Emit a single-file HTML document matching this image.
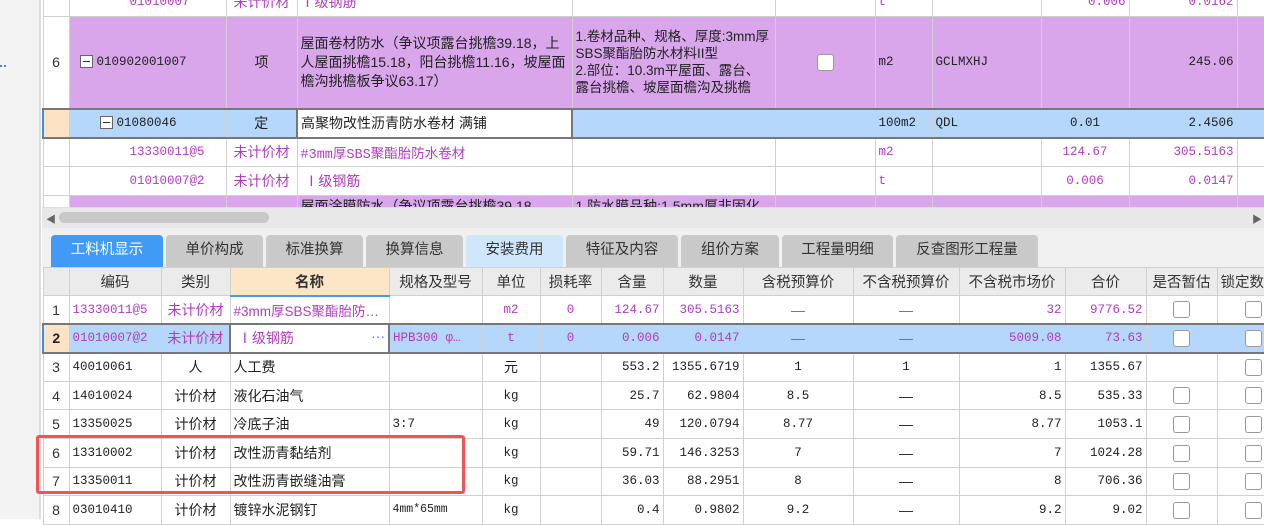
<!DOCTYPE html>
<html><head><meta charset="utf-8"><style>
*{box-sizing:border-box;margin:0;padding:0}
body{width:1264px;height:519px;overflow:hidden;background:#fff;font-family:"Liberation Sans","Noto Sans CJK SC",sans-serif;font-size:14px;color:#222;position:relative}
.side{position:absolute;left:0;top:0;width:41px;height:519px;background:#f3f3f3;border-right:2px solid #ddd}
.dots{position:absolute;left:0;top:65px;width:6px;height:2px;border-left:2px solid #4a7fd0;border-right:2px solid #4a7fd0}
table{border-collapse:collapse;table-layout:fixed;position:absolute}
td{border:1px solid #d0d0d0;height:29px;padding:0 3px;white-space:nowrap;overflow:hidden;font-size:14px}
.bt td{height:28.6px}
.m{font-family:"Liberation Mono","Noto Sans CJK SC",monospace;font-size:12.5px}
.c{text-align:center}.r{text-align:right}
.pk{color:#b03cc0}
.pu td{background:#d9a6ec}
.sel td{background:#b4d7fb;border-top:2px solid #777;border-bottom:2px solid #777}
.num{color:#333;text-align:center}
.wrap{white-space:normal;line-height:19px;font-size:14px;vertical-align:middle}
.topclip{position:absolute;left:42px;top:0;width:1222px;height:207px;overflow:hidden}
.box{display:inline-block;width:13px;height:13px;border:1px solid #666;background:#fff;vertical-align:middle;position:relative;margin-right:4px}
.box:after{content:"";position:absolute;left:2px;right:2px;top:5px;height:1px;background:#333}
.cb{display:inline-block;width:17px;height:17px;border:1px solid #999;border-radius:3px;background:#fff;vertical-align:middle}
.sb{position:absolute;left:42px;top:207px;width:1222px;height:21px;background:#e8e8e8;border-top:1px solid #ddd}
.thumb{position:absolute;left:17px;top:4px;width:210px;height:11px;background:#c9c9c9;border-radius:6px}
.tabs{position:absolute;left:42px;top:228px;width:1222px;height:39px;background:#f0f0f0}
.tab{position:absolute;top:7px;height:32px;background:#c9c9c9;border-radius:4px 4px 0 0;text-align:center;line-height:31px;font-size:14.5px;color:#333}
.hd td{background:#ebebeb;text-align:center;height:28px;font-size:14.5px;color:#333}
.redbox{position:absolute;left:36px;top:435px;width:429px;height:59px;border:3px solid #f05555;border-radius:3px}
</style></head><body>
<div class="side"><div class="dots"></div></div>

<div class="topclip">
<table style="left:0;top:-14px;width:1240px">
<colgroup><col style="width:26px"><col style="width:157px"><col style="width:71px"><col style="width:275px"><col style="width:203px"><col style="width:100px"><col style="width:57px"><col style="width:109px"><col style="width:88px"><col style="width:108px"><col style="width:46px"></colgroup>
<tr style="height:30px"><td></td><td class="m pk" style="padding-left:60px">01010007</td><td class="pk c">未计价材</td><td class="pk">Ⅰ级钢筋</td><td></td><td></td><td class="m pk">t</td><td></td><td class="m pk r">0.006</td><td class="m pk r">0.0162</td><td></td></tr>
<tr class="pu" style="height:92px"><td class="num" style="background:#fff">6</td><td class="m" style="padding-left:10px"><span class="box"></span>010902001007</td><td class="c">项</td><td class="wrap">屋面卷材防水（争议项露台挑檐39.18，上人屋面挑檐15.18，阳台挑檐11.16，坡屋面檐沟挑檐板争议63.17）</td><td class="wrap" style="font-size:13.5px;line-height:17px">1.卷材品种、规格、厚度:3mm厚SBS聚酯胎防水材料II型<br>2.部位：10.3m平屋面、露台、露台挑檐、坡屋面檐沟及挑檐</td><td class="c"><span class="cb"></span></td><td class="m">m2</td><td class="m">GCLMXHJ</td><td></td><td class="m r">245.06</td><td></td></tr>
<tr class="sel"><td style="background:#fde3c4;border-left:2px solid #3b8ee0"></td><td class="m" style="padding-left:30px"><span class="box"></span>01080046</td><td class="c">定</td><td style="background:#fff;border:2px solid #777">高聚物改性沥青防水卷材 满铺</td><td></td><td></td><td class="m">100m2</td><td class="m">QDL</td><td class="m c">0.01</td><td class="m r">2.4506</td><td></td></tr>
<tr><td></td><td class="m pk" style="padding-left:60px">13330011@5</td><td class="pk c">未计价材</td><td class="pk m" style="font-family:'Liberation Mono','Noto Sans CJK SC',monospace;font-size:13.5px">#3mm厚SBS聚酯胎防水卷材</td><td></td><td></td><td class="m pk">m2</td><td></td><td class="m pk c">124.67</td><td class="m pk r">305.5163</td><td></td></tr>
<tr><td></td><td class="m pk" style="padding-left:60px">01010007@2</td><td class="pk c">未计价材</td><td class="pk">&nbsp;Ⅰ级钢筋</td><td></td><td></td><td class="m pk">t</td><td></td><td class="m pk c">0.006</td><td class="m pk r">0.0147</td><td></td></tr>
<tr class="pu" style="height:30px"><td style="background:#fff"></td><td></td><td></td><td style="vertical-align:top;padding-top:0">屋面涂膜防水（争议项露台挑檐39.18，</td><td style="vertical-align:top">1.防水膜品种:1.5mm厚非固化</td><td></td><td></td><td></td><td></td><td></td><td></td></tr>
</table>
</div>
<div class="sb"><span style="position:absolute;left:4px;top:3px;font-size:10px;color:#666">◀</span><div class="thumb"></div><span style="position:absolute;right:2px;top:3px;font-size:10px;color:#666">▶</span></div>

<div class="tabs">
<div class="tab" style="left:9px;width:112px;background:#3f9bf5;color:#fff">工料机显示</div>
<div class="tab" style="left:124px;width:97px">单价构成</div>
<div class="tab" style="left:224px;width:97px">标准换算</div>
<div class="tab" style="left:324px;width:97px">换算信息</div>
<div class="tab" style="left:424px;width:97px;background:#cfe6fb">安装费用</div>
<div class="tab" style="left:524px;width:112px">特征及内容</div>
<div class="tab" style="left:639px;width:98px">组价方案</div>
<div class="tab" style="left:740px;width:111px">工程量明细</div>
<div class="tab" style="left:854px;width:142px">反查图形工程量</div>
</div>

<table class="bt" style="left:42px;top:267px;width:1270px">
<colgroup><col style="width:26px"><col style="width:92px"><col style="width:69px"><col style="width:159px"><col style="width:93px"><col style="width:58px"><col style="width:61px"><col style="width:62px"><col style="width:80px"><col style="width:110px"><col style="width:106px"><col style="width:106px"><col style="width:81px"><col style="width:71px"><col style="width:96px"></colgroup>
<tr class="hd"><td></td><td>编码</td><td>类别</td><td style="background:#fde6c6;font-weight:bold;border-bottom:2px solid #4a9be8">名称</td><td>规格及型号</td><td>单位</td><td>损耗率</td><td>含量</td><td>数量</td><td>含税预算价</td><td>不含税预算价</td><td>不含税市场价</td><td>合价</td><td>是否暂估</td><td style="text-align:left">锁定数</td></tr>
<tr><td class="num">1</td><td class="m pk">13330011@5</td><td class="pk c">未计价材</td><td class="pk" style="font-size:13.5px">#3mm厚SBS聚酯胎防…</td><td></td><td class="m pk c">m2</td><td class="m pk c">0</td><td class="m pk r">124.67</td><td class="m pk r">305.5163</td><td class="pk c">—</td><td class="pk c">—</td><td class="m pk r">32</td><td class="m pk r">9776.52</td><td class="c"><span class="cb"></span></td><td style="padding-left:27px"><span class="cb"></span></td></tr>
<tr class="sel"><td style="background:#fde3c4;font-weight:bold;text-align:center;border-left:2px solid #3b8ee0">2</td><td class="m pk">01010007@2</td><td class="pk c">未计价材</td><td class="pk" style="background:#fff;border:2px solid #777">&nbsp;Ⅰ级钢筋<span style="float:right;color:#3b7dd8">···</span></td><td class="m pk">HPB300 φ…</td><td class="m pk c">t</td><td class="m pk c">0</td><td class="m pk r">0.006</td><td class="m pk r">0.0147</td><td class="pk c">—</td><td class="pk c">—</td><td class="m pk r">5009.08</td><td class="m pk r">73.63</td><td class="c"><span class="cb"></span></td><td style="padding-left:27px"><span class="cb"></span></td></tr>
<tr><td class="num">3</td><td class="m">40010061</td><td class="c">人</td><td>人工费</td><td></td><td class="c">元</td><td></td><td class="m r">553.2</td><td class="m r">1355.6719</td><td class="m c">1</td><td class="m c">1</td><td class="m r">1</td><td class="m r">1355.67</td><td></td><td style="padding-left:27px"><span class="cb"></span></td></tr>
<tr><td class="num">4</td><td class="m">14010024</td><td class="c">计价材</td><td>液化石油气</td><td></td><td class="m c">kg</td><td></td><td class="m r">25.7</td><td class="m r">62.9804</td><td class="m c">8.5</td><td class="c">—</td><td class="m r">8.5</td><td class="m r">535.33</td><td class="c"><span class="cb"></span></td><td style="padding-left:27px"><span class="cb"></span></td></tr>
<tr><td class="num">5</td><td class="m">13350025</td><td class="c">计价材</td><td>冷底子油</td><td class="m">3:7</td><td class="m c">kg</td><td></td><td class="m r">49</td><td class="m r">120.0794</td><td class="m c">8.77</td><td class="c">—</td><td class="m r">8.77</td><td class="m r">1053.1</td><td class="c"><span class="cb"></span></td><td style="padding-left:27px"><span class="cb"></span></td></tr>
<tr><td class="num">6</td><td class="m">13310002</td><td class="c">计价材</td><td>改性沥青黏结剂</td><td></td><td class="m c">kg</td><td></td><td class="m r">59.71</td><td class="m r">146.3253</td><td class="m c">7</td><td class="c">—</td><td class="m r">7</td><td class="m r">1024.28</td><td class="c"><span class="cb"></span></td><td style="padding-left:27px"><span class="cb"></span></td></tr>
<tr><td class="num">7</td><td class="m">13350011</td><td class="c">计价材</td><td>改性沥青嵌缝油膏</td><td></td><td class="m c">kg</td><td></td><td class="m r">36.03</td><td class="m r">88.2951</td><td class="m c">8</td><td class="c">—</td><td class="m r">8</td><td class="m r">706.36</td><td class="c"><span class="cb"></span></td><td style="padding-left:27px"><span class="cb"></span></td></tr>
<tr><td class="num">8</td><td class="m">03010410</td><td class="c">计价材</td><td>镀锌水泥钢钉</td><td class="m" style="font-size:11.5px">4mm*65mm</td><td class="m c">kg</td><td></td><td class="m r">0.4</td><td class="m r">0.9802</td><td class="m c">9.2</td><td class="c">—</td><td class="m r">9.2</td><td class="m r">9.02</td><td class="c"><span class="cb"></span></td><td style="padding-left:27px"><span class="cb"></span></td></tr>
</table>
<div class="redbox"></div>
</body></html>
